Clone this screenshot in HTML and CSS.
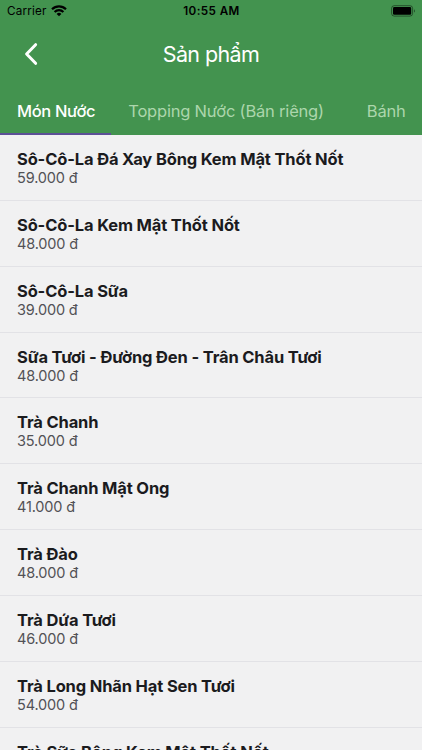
FILE: index.html
```html
<!DOCTYPE html>
<html lang="vi">

<head>
    <meta charset="UTF-8">
    <meta name="viewport" content="width=device-width, initial-scale=1.0">
    <title>Sản phẩm</title>
    <link rel="stylesheet" href="styles.css">
</head>

<body>
    <header class="header">
        <div class="status-bar">
            <div class="carrier">
                <span>Carrier</span>
                <svg class="wifi" width="16" height="12" viewBox="0 0 16 12">
                    <g fill="none" stroke="#000" stroke-width="2.2">
                        <path d="M1 4.3a10 10 0 0 1 14 0" />
                        <path d="M3.6 7a6.2 6.2 0 0 1 8.8 0" />
                    </g>
                    <path d="M8 11.3L5.6 8.9a3.4 3.4 0 0 1 4.8 0z" />
                </svg>
            </div>
            <span class="time">10:55 AM</span>
            <svg class="battery" width="25" height="12" viewBox="0 0 25 12">
                <rect x="0.6" y="0.7" width="21" height="10.4" rx="2.6" fill="none" stroke="#000" stroke-opacity="0.45" />
                <rect x="2" y="2.1" width="18.2" height="7.6" rx="1.3" />
                <path d="M23 4.2v3.4c1.2-.5 1.2-2.9 0-3.4z" fill-opacity="0.5" />
            </svg>
        </div>

        <div class="nav-bar">
            <button type="button" class="back" aria-label="Quay lại">
                <svg width="14" height="24" viewBox="0 0 14 24">
                    <path d="M11.6 2.7L2.6 12l9 9.3" fill="none" stroke="#fff" stroke-width="3" stroke-linecap="round" stroke-linejoin="round" />
                </svg>
            </button>
            <h1>Sản phẩm</h1>
        </div>

        <nav class="tabs">
            <a class="tab active">Món Nước</a>
            <a class="tab">Topping Nước (Bán riêng)</a>
            <a class="tab">Bánh</a>
        </nav>
    </header>

    <main class="product-list">
        <div class="product-item">
            <h2>Sô-Cô-La Đá Xay Bông Kem Mật Thốt Nốt</h2>
            <p>59.000 đ</p>
        </div>
        <div class="product-item">
            <h2>Sô-Cô-La Kem Mật Thốt Nốt</h2>
            <p>48.000 đ</p>
        </div>
        <div class="product-item">
            <h2>Sô-Cô-La Sữa</h2>
            <p>39.000 đ</p>
        </div>
        <div class="product-item">
            <h2>Sữa Tươi - Đường Đen - Trân Châu Tươi</h2>
            <p>48.000 đ</p>
        </div>
        <div class="product-item">
            <h2>Trà Chanh</h2>
            <p>35.000 đ</p>
        </div>
        <div class="product-item">
            <h2>Trà Chanh Mật Ong</h2>
            <p>41.000 đ</p>
        </div>
        <div class="product-item">
            <h2>Trà Đào</h2>
            <p>48.000 đ</p>
        </div>
        <div class="product-item">
            <h2>Trà Dứa Tươi</h2>
            <p>46.000 đ</p>
        </div>
        <div class="product-item">
            <h2>Trà Long Nhãn Hạt Sen Tươi</h2>
            <p>54.000 đ</p>
        </div>
        <div class="product-item">
            <h2>Trà Sữa Bông Kem Mật Thốt Nốt</h2>
        </div>
    </main>
</body>

</html>
```
FILE: styles.css
```css
* {
    box-sizing: border-box;
}

body {
    margin: 0;
    height: 750px;
    overflow: hidden;
    font-family: Inter, "Liberation Sans", sans-serif;
    background-color: #f1f1f2;
    color: #1b1b1e;
}

.header {
    height: 135px;
    background-color: #43934f;
    color: #fff;
}

.status-bar {
    display: grid;
    grid-template-columns: 1fr auto 1fr;
    align-items: center;
    height: 22px;
    padding: 0 6px 0 7px;
    color: #000;
    font-size: 11.7px;
}

.carrier {
    display: flex;
    align-items: center;
    gap: 4px;
    letter-spacing: 0.2px;
}

.time {
    font-weight: 600;
    letter-spacing: 0.4px;
}

.battery {
    justify-self: end;
}

.nav-bar {
    display: grid;
    grid-template-columns: 62px 1fr 62px;
    align-items: center;
    height: 64px;
}

.back {
    display: flex;
    padding: 0 0 0 24px;
    border: none;
    background: none;
}

.nav-bar h1 {
    margin: 0;
    font-size: 21.5px;
    font-weight: 400;
    letter-spacing: -0.6px;
    text-align: center;
}

.tabs {
    display: flex;
    height: 49px;
    overflow: hidden;
}

.tab {
    flex-shrink: 0;
    padding: 15px 16px 0 17px;
    border-bottom: 2px solid transparent;
    color: #acd6ac;
    font-size: 16.5px;
    letter-spacing: -0.2px;
    line-height: 20px;
    white-space: nowrap;
}

.tab + .tab {
    padding-right: 26px;
}

.tab.active {
    border-bottom-color: #5c5096;
    color: #fff;
    font-weight: 500;
    letter-spacing: -0.35px;
}

.product-item {
    height: 65.85px;
    padding: 14px 17px 0;
    border-bottom: 1px solid #e2e2e6;
}

.product-item h2 {
    margin: 0;
    font-size: 16.5px;
    font-weight: 650;
    letter-spacing: -0.15px;
    line-height: 20px;
    white-space: nowrap;
}

.product-item p {
    margin: 0;
    color: #525256;
    font-size: 14.5px;
    letter-spacing: -0.15px;
    line-height: 17px;
}
```
